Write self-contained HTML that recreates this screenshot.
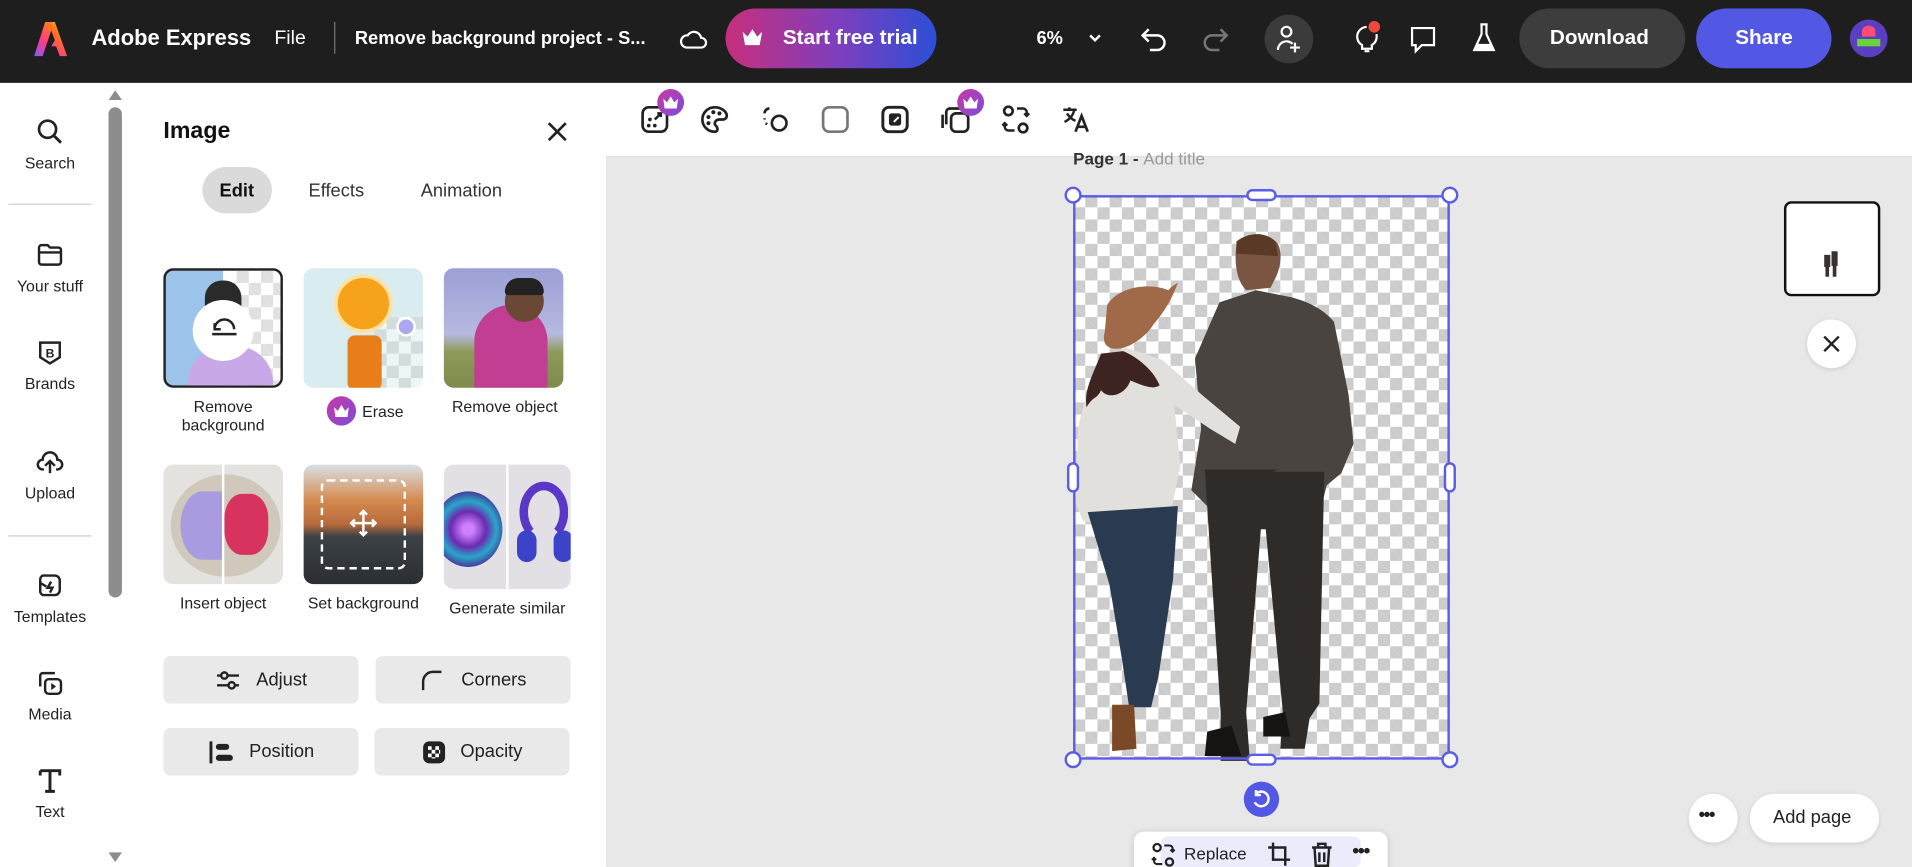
<!DOCTYPE html>
<html><head><meta charset="utf-8">
<style>
*{box-sizing:border-box;margin:0;padding:0}
html,body{width:1912px;height:867px;overflow:hidden;background:#e8e8e8;font-family:"Liberation Sans",sans-serif}
#st{position:absolute;left:0;top:0;width:1568px;height:711px;transform:scale(1.21939);transform-origin:0 0;background:#e8e8e8;overflow:hidden}
.a{position:absolute}
.top{left:0;top:0;width:1568px;height:68px;background:#1e1e1e;color:#fff}
.t{position:absolute;font-size:16px;color:#fff;white-space:nowrap}
.rail{left:0;top:68px;width:104px;height:660px;background:#fff}
.ri{position:absolute;left:0;width:82px;text-align:center;font-size:13px;color:#222}
.ri svg{display:block;margin:0 auto 6px}
.panel{left:104px;top:68px;width:393px;height:660px;background:#fff}
.tile{position:absolute;width:98px;height:98px;border-radius:8px;overflow:hidden}
.lab{position:absolute;font-size:13px;color:#222;text-align:center;width:120px}
.btn{position:absolute;width:160px;height:39px;background:#e9e9e9;border-radius:6px;font-size:15px;color:#222;display:flex;align-items:center;justify-content:center;gap:12px}
.chk{background-color:#fff;background-image:linear-gradient(45deg,#ccc 25%,transparent 25%,transparent 75%,#ccc 75%),linear-gradient(45deg,#ccc 25%,transparent 25%,transparent 75%,#ccc 75%);background-size:20px 20px;background-position:0 0,10px 10px}
.tb svg{position:absolute}
</style></head><body><div id="st">

<div class="a top">
 <svg class="a" style="left:26px;top:16px" width="30" height="32" viewBox="0 0 30 32"><defs><linearGradient id="lg" x1="0" y1="1" x2="1" y2="0"><stop offset="0" stop-color="#7b5cff"/><stop offset=".35" stop-color="#ff3a8a"/><stop offset=".7" stop-color="#ff7a1a"/><stop offset="1" stop-color="#ffcf2e"/></linearGradient></defs><path d="M11 2h8l10 28h-6l-3-8h-4l3-5-3-8-7 21H2z" fill="url(#lg)"/></svg>
 <div class="t" style="left:75px;top:21px;font-size:18px;font-weight:bold">Adobe Express</div>
 <div class="t" style="left:225px;top:23px">File</div>
 <div class="a" style="left:274px;top:18px;width:1px;height:26px;background:#777"></div>
 <div class="t" style="left:291px;top:23px;font-size:15px;font-weight:bold">Remove background project - S...</div>
 <svg class="a" style="left:556px;top:20px" width="26" height="24" viewBox="0 0 26 24"><path d="M7 19h12a4 4 0 0 0 0-8 6 6 0 0 0-11-2 5 5 0 0 0-1 10z" fill="none" stroke="#fff" stroke-width="1.8"/></svg>
 <div class="a" style="left:595px;top:7px;width:173px;height:49px;border-radius:25px;background:linear-gradient(90deg,#c72f7c,#7b3fbf 55%,#2b4fd6)"></div>
 <svg class="a" style="left:607px;top:22px" width="20" height="18" viewBox="0 0 20 18"><path d="M2 4l4 4 4-6 4 6 4-4-2 11H4z" fill="#fff"/></svg>
 <div class="t" style="left:642px;top:21px;font-size:17px;font-weight:bold">Start free trial</div>
 <div class="t" style="left:850px;top:23px;font-size:15px;font-weight:bold">6%</div>
 <svg class="a" style="left:891px;top:24px" width="14" height="14" viewBox="0 0 14 14"><path d="M3 5l4 4 4-4" fill="none" stroke="#fff" stroke-width="2"/></svg>
 <svg class="a" style="left:933px;top:18px" width="28" height="28" viewBox="0 0 28 28"><path d="M9 6L4 11l5 5M4 11h12a6 6 0 0 1 0 12h-6" fill="none" stroke="#fff" stroke-width="2"/></svg>
 <svg class="a" style="left:982px;top:18px" width="28" height="28" viewBox="0 0 28 28"><path d="M19 6l5 5-5 5M24 11H12a6 6 0 0 0 0 12h6" fill="none" stroke="#777" stroke-width="2"/></svg>
 <div class="a" style="left:1037px;top:12px;width:40px;height:40px;border-radius:50%;background:#3b3b3b"></div>
 <svg class="a" style="left:1045px;top:19px" width="24" height="26" viewBox="0 0 24 26"><circle cx="10" cy="7" r="4" fill="none" stroke="#fff" stroke-width="1.8"/><path d="M3 22a7 7 0 0 1 12-5M17 16v8M13 20h8" fill="none" stroke="#fff" stroke-width="1.8"/></svg>
 <svg class="a" style="left:1108px;top:16px" width="26" height="30" viewBox="0 0 26 30"><path d="M11 26h4M9 21a8 8 0 1 1 8 0v3H9z" fill="none" stroke="#fff" stroke-width="1.8"/><circle cx="19" cy="6" r="5.5" fill="#f0483b" stroke="#1e1e1e" stroke-width="1.5"/></svg>
 <svg class="a" style="left:1154px;top:19px" width="26" height="26" viewBox="0 0 26 26"><path d="M4 4h18v14h-10l-5 5v-5H4z" fill="none" stroke="#fff" stroke-width="1.8"/></svg>
 <svg class="a" style="left:1206px;top:17px" width="22" height="28" viewBox="0 0 22 28"><path d="M8 3h6M9 3v8L3 24h16l-6-13V3" fill="none" stroke="#fff" stroke-width="1.8"/><path d="M5 19h12l2 5H3z" fill="#fff"/></svg>
 <div class="a" style="left:1246px;top:7px;width:136px;height:49px;border-radius:25px;background:#3d3d3d"></div>
 <div class="t" style="left:1271px;top:21px;font-size:17px;font-weight:bold">Download</div>
 <div class="a" style="left:1391px;top:7px;width:111px;height:49px;border-radius:25px;background:#5258e4"></div>
 <div class="t" style="left:1423px;top:21px;font-size:17px;font-weight:bold">Share</div>
 <div class="a" style="left:1517px;top:16px;width:31px;height:31px;border-radius:50%;background:#5a3fc0"></div>
 <div class="a" style="left:1527px;top:21px;width:11px;height:9px;border-radius:50% 50% 0 0;background:#ff4d7a"></div>
 <div class="a" style="left:1523px;top:32px;width:19px;height:6px;background:#6ad33a"></div>
</div>

<div class="a rail">
 <div class="a" style="left:89px;top:20px;width:11px;height:402px;border-radius:6px;background:#8d8d8d"></div>
 <svg class="a" style="left:88px;top:5px" width="13" height="10"><path d="M1 9l5.5-8 5.5 8z" fill="#8d8d8d"/></svg>
 <svg class="a" style="left:88px;top:630px" width="13" height="10"><path d="M1 1l5.5 8 5.5-8z" fill="#8d8d8d"/></svg>
 <div class="a" style="left:7px;top:99px;width:68px;height:1px;background:#ccc"></div>
 <div class="a" style="left:7px;top:371px;width:68px;height:1px;background:#ccc"></div>
 <div class="ri" style="top:28px"><svg width="24" height="24" viewBox="0 0 24 24"><circle cx="10" cy="10" r="7" fill="none" stroke="#222" stroke-width="2.2"/><path d="M15 15l6 6" stroke="#222" stroke-width="2.4"/></svg>Search</div>
 <div class="ri" style="top:129px"><svg width="24" height="24" viewBox="0 0 24 24"><path d="M3 6a2 2 0 0 1 2-2h5l2 2h7a2 2 0 0 1 2 2v10a2 2 0 0 1-2 2H5a2 2 0 0 1-2-2zM3 10h18" fill="none" stroke="#222" stroke-width="2"/></svg>Your stuff</div>
 <div class="ri" style="top:209px"><svg width="24" height="24" viewBox="0 0 24 24"><path d="M4 4h16v12l-8 5-8-5z" fill="none" stroke="#222" stroke-width="2"/><text x="12" y="16" font-size="10" font-weight="bold" text-anchor="middle" fill="#222" font-family="Liberation Sans">B</text></svg>Brands</div>
 <div class="ri" style="top:299px"><svg width="24" height="24" viewBox="0 0 24 24"><path d="M7 18H6a4 4 0 0 1 0-8 6 6 0 0 1 12 0 4 4 0 0 1 0 8h-1M12 21v-9M8 15l4-4 4 4" fill="none" stroke="#222" stroke-width="2"/></svg>Upload</div>
 <div class="ri" style="top:400px"><svg width="24" height="24" viewBox="0 0 24 24"><path d="M6 4h10a4 4 0 0 1 4 4v8a4 4 0 0 1-4 4H6a4 4 0 0 1-2-4V8a4 4 0 0 1 2-4zM13 9l-3 5h4l-2 4M4 10l5 3" fill="none" stroke="#222" stroke-width="2"/></svg>Templates</div>
 <div class="ri" style="top:480px"><svg width="24" height="24" viewBox="0 0 24 24"><path d="M4 15V6a2 2 0 0 1 2-2h10" fill="none" stroke="#222" stroke-width="2"/><rect x="8" y="9" width="13" height="12" rx="3" fill="none" stroke="#222" stroke-width="2"/><path d="M13 12v6l4-3z" fill="#222"/></svg>Media</div>
 <div class="ri" style="top:560px"><svg width="24" height="24" viewBox="0 0 24 24"><path d="M4 4h16v4M4 4v4M12 4v17M8 21h8" fill="none" stroke="#222" stroke-width="2.4"/></svg>Text</div>
</div>

<div class="a panel">
 <div class="a" style="left:30px;top:29px;font-size:19px;font-weight:bold;color:#111">Image</div>
 <svg class="a" style="left:343px;top:30px" width="20" height="20" viewBox="0 0 20 20"><path d="M3 3l14 14M17 3L3 17" stroke="#222" stroke-width="2.2"/></svg>
 <div class="a" style="left:62px;top:69px;width:57px;height:38px;border-radius:19px;background:#dadada"></div>
 <div class="a" style="left:76px;top:80px;font-size:15px;font-weight:bold;color:#111">Edit</div>
 <div class="a" style="left:149px;top:80px;font-size:15px;color:#333">Effects</div>
 <div class="a" style="left:241px;top:80px;font-size:15px;color:#333">Animation</div>

 <div class="tile" style="left:30px;top:152px;border:2px solid #222;background:linear-gradient(90deg,#9cc3ea 50%,transparent 50%)"><div class="chk" style="position:absolute;left:48px;top:0;width:50px;height:98px;opacity:.6"></div><div style="position:absolute;left:18px;top:62px;width:70px;height:40px;border-radius:30px 30px 0 0;background:#c8a8e6"></div><div style="position:absolute;left:32px;top:8px;width:30px;height:40px;border-radius:14px;background:#2a2a2a"></div><div style="position:absolute;left:22px;top:24px;width:50px;height:50px;border-radius:50%;background:#fff"></div></div>
 <svg class="a" style="left:67px;top:188px" width="26" height="22" viewBox="0 0 26 22"><path d="M5 14a8 8 0 0 1 16 0M3 18h20M5 9l0 5 5 0" fill="none" stroke="#222" stroke-width="2"/></svg>
 <div class="lab" style="left:19px;top:258px">Remove<br>background</div>

 <div class="tile" style="left:145px;top:152px;background:#d9ecef"><div class="chk" style="position:absolute;left:58px;top:40px;width:40px;height:58px;opacity:.5"></div><div style="position:absolute;left:25px;top:5px;width:48px;height:48px;border-radius:50%;background:#f6a21c;border:3px solid #ffe2a0"></div><div style="position:absolute;left:36px;top:55px;width:28px;height:45px;border-radius:6px;background:#e77e1a"></div><div style="position:absolute;left:76px;top:40px;width:16px;height:16px;border-radius:50%;background:#a9a8f0;border:2px solid #fff"></div></div>
 <div class="a" style="left:164px;top:257px;width:24px;height:24px;border-radius:50%;background:linear-gradient(135deg,#c93aa0,#7b4be0)"></div>
 <svg class="a" style="left:169px;top:263px" width="14" height="12" viewBox="0 0 14 12"><path d="M1 3l3 3 3-5 3 5 3-3-1 8H2z" fill="#fff"/></svg>
 <div class="a" style="left:193px;top:262px;font-size:13px;color:#222">Erase</div>

 <div class="tile" style="left:260px;top:152px;background:linear-gradient(#9b9fd6,#b6b9df 55%,#8e9a58 70%,#7d8b4c)"><div style="position:absolute;left:25px;top:30px;width:60px;height:68px;border-radius:30px 30px 0 0;background:#c13e93"></div><div style="position:absolute;left:50px;top:10px;width:32px;height:34px;border-radius:50%;background:#6b4735"></div><div style="position:absolute;left:50px;top:8px;width:32px;height:14px;border-radius:16px 16px 4px 4px;background:#222"></div></div>
 <div class="lab" style="left:250px;top:258px">Remove object</div>

 <div class="tile" style="left:30px;top:313px;background:#e4e2df"><div style="position:absolute;left:6px;top:8px;width:90px;height:84px;border-radius:50%;background:#cfc8bb"></div><div style="position:absolute;left:14px;top:22px;width:36px;height:56px;border-radius:50% 0 0 50%;background:#a89be0"></div><div style="position:absolute;left:50px;top:24px;width:36px;height:50px;border-radius:40%;background:#d8335f"></div><div style="position:absolute;left:48px;top:0;width:2px;height:98px;background:#fff"></div></div>
 <div class="lab" style="left:19px;top:419px">Insert object</div>

 <div class="tile" style="left:145px;top:313px;background:linear-gradient(#d9e0e6,#d48a4f 30%,#b76a3b 50%,#3d4247 60%,#2a2e33)"><div style="position:absolute;left:14px;top:12px;width:70px;height:74px;border:2px dashed #fff;border-radius:6px"></div></div>
 <svg class="a" style="left:182px;top:349px" width="24" height="24" viewBox="0 0 24 24"><path d="M12 2v20M2 12h20M9 5l3-3 3 3M9 19l3 3 3-3M5 9l-3 3 3 3M19 9l3 3-3 3" fill="none" stroke="#fff" stroke-width="2"/></svg>
 <div class="lab" style="left:134px;top:419px">Set background</div>

 <div class="tile" style="left:260px;top:313px;width:104px;height:102px;background:#e2e0e4"><div style="position:absolute;left:-8px;top:22px;width:56px;height:62px;border-radius:50%;background:radial-gradient(circle,#d080ff 10%,#6a2bb0 35%,#2aa6c9 55%,#4b1c8e 80%)"></div><div style="position:absolute;left:51px;top:0;width:2px;height:102px;background:#fff"></div><div style="position:absolute;left:62px;top:14px;width:40px;height:50px;border-radius:50%;border:7px solid #5b37c8;border-bottom-color:transparent"></div><div style="position:absolute;left:60px;top:54px;width:16px;height:26px;border-radius:8px;background:#3b44c8"></div><div style="position:absolute;left:90px;top:54px;width:16px;height:26px;border-radius:8px;background:#3b44c8"></div></div>
 <div class="lab" style="left:252px;top:423px">Generate similar</div>

 <div class="btn" style="left:30px;top:470px"><svg width="22" height="18" viewBox="0 0 22 18"><path d="M2 5h18M2 13h18" stroke="#222" stroke-width="2"/><circle cx="8" cy="5" r="2.6" fill="#e9e9e9" stroke="#222" stroke-width="2"/><circle cx="14" cy="13" r="2.6" fill="#e9e9e9" stroke="#222" stroke-width="2"/></svg>Adjust</div>
 <div class="btn" style="left:204px;top:470px"><svg width="22" height="18" viewBox="0 0 22 18"><path d="M3 17V10a8 8 0 0 1 8-8h7" fill="none" stroke="#222" stroke-width="2"/></svg>Corners</div>
 <div class="btn" style="left:30px;top:529px"><svg width="22" height="20" viewBox="0 0 22 20"><path d="M3 1v18" stroke="#222" stroke-width="2.4"/><rect x="7" y="3" width="11" height="5" rx="2.5" fill="#222"/><rect x="7" y="12" width="14" height="5" rx="2.5" fill="#222"/></svg>Position</div>
 <div class="btn" style="left:203px;top:529px"><svg width="20" height="20" viewBox="0 0 20 20"><rect x="1" y="1" width="18" height="18" rx="5" fill="#222"/><path d="M5 5h3v3H5zM11 5h3v3h-3zM8 8h3v3H8zM5 11h3v3H5zM11 11h3v3h-3zM14 8h1v3h-1zM8 14h3v1H8z" fill="#fff"/></svg>Opacity</div>
</div>

<div class="a tb" style="left:497px;top:68px;width:1071px;height:61px;background:#fff;border-bottom:1px solid #ddd">
 <svg style="left:27px;top:17px" width="26" height="26" viewBox="0 0 26 26"><rect x="3" y="3" width="20" height="20" rx="5" fill="none" stroke="#222" stroke-width="2.2"/><circle cx="9" cy="13" r="1.5" fill="#222"/><circle cx="13" cy="18" r="1.5" fill="#222"/><circle cx="8" cy="18" r="1.5" fill="#222"/><path d="M13 13l5-5M15 8h3v3" stroke="#222" stroke-width="2" fill="none"/></svg>
 <div class="a" style="left:42px;top:5px;width:22px;height:22px;border-radius:50%;background:linear-gradient(135deg,#c93aa0,#7b4be0)"></div>
 <svg style="left:46px;top:10px" width="14" height="12" viewBox="0 0 14 12"><path d="M1 3l3 3 3-5 3 5 3-3-1 8H2z" fill="#fff"/></svg>
 <svg style="left:76px;top:17px" width="26" height="26" viewBox="0 0 26 26"><path d="M13 3a10 10 0 0 0 0 20c3 0 3-3 1-5s0-5 3-5h3a3 3 0 0 0 3-3c0-4-5-7-10-7z" fill="none" stroke="#222" stroke-width="2.2"/><circle cx="8" cy="11" r="1.7" fill="#222"/><circle cx="12" cy="7" r="1.7" fill="#222"/><circle cx="17" cy="8" r="1.7" fill="#222"/><circle cx="8" cy="16" r="1.7" fill="#222"/></svg>
 <svg style="left:126px;top:17px" width="26" height="26" viewBox="0 0 26 26"><circle cx="16" cy="16" r="6" fill="none" stroke="#222" stroke-width="2.2"/><path d="M4 8a4 4 0 0 1 4-4M4 13v-1M6 17l-1-1" fill="none" stroke="#222" stroke-width="2.2"/></svg>
 <svg style="left:175px;top:17px" width="26" height="26" viewBox="0 0 26 26"><rect x="3" y="3" width="20" height="20" rx="5" fill="none" stroke="#777" stroke-width="2.2"/></svg>
 <svg style="left:224px;top:17px" width="26" height="26" viewBox="0 0 26 26"><rect x="3" y="3" width="20" height="20" rx="5" fill="none" stroke="#222" stroke-width="2.4"/><rect x="8" y="8" width="10" height="10" rx="2" fill="#222"/><path d="M12 15l4-4" stroke="#fff" stroke-width="1.5"/></svg>
 <svg style="left:274px;top:17px" width="26" height="26" viewBox="0 0 26 26"><path d="M5 17V7a3 3 0 0 1 3-3h10M2 20V9" fill="none" stroke="#222" stroke-width="2.2"/><rect x="9" y="8" width="14" height="15" rx="4" fill="none" stroke="#222" stroke-width="2.2"/></svg>
 <div class="a" style="left:288px;top:5px;width:22px;height:22px;border-radius:50%;background:linear-gradient(135deg,#c93aa0,#7b4be0)"></div>
 <svg style="left:292px;top:10px" width="14" height="12" viewBox="0 0 14 12"><path d="M1 3l3 3 3-5 3 5 3-3-1 8H2z" fill="#fff"/></svg>
 <svg style="left:323px;top:16px" width="26" height="28" viewBox="0 0 26 28"><circle cx="7" cy="7" r="3.5" fill="none" stroke="#222" stroke-width="2.2"/><circle cx="19" cy="21" r="3.5" fill="none" stroke="#222" stroke-width="2.2"/><path d="M14 5h5a3 3 0 0 1 3 3v3M20 9l2 2 2-2M12 23H7a3 3 0 0 1-3-3v-3M6 19l-2-2-2 2" fill="none" stroke="#222" stroke-width="2"/></svg>
 <svg style="left:373px;top:17px" width="26" height="26" viewBox="0 0 26 26"><path d="M2 5h11M7 3v2M11 5c-1 5-4 8-8 10M5 8c2 3 4 5 7 6" fill="none" stroke="#222" stroke-width="2"/><path d="M12 23l5-13 5 13M14 19h6" fill="none" stroke="#222" stroke-width="2.2"/></svg>
</div>

<div class="a" style="left:880px;top:122px;font-size:14px;color:#333;font-weight:bold">Page 1 - <span style="color:#999;font-weight:normal">Add title</span></div>

<div class="a chk" style="left:880px;top:160px;width:309px;height:463px"></div>
<svg class="a" style="left:0;top:0" width="1568" height="711" viewBox="0 0 1568 711">
 <path d="M1014 200c8-10 26-10 34 0 4 8 2 20-2 28l-4 8-20 2c-8-8-10-22-8-38z" fill="#7a5542"/>
 <path d="M1014 198c10-8 24-8 32 0l2 12-34-2z" fill="#5a3a26"/>
 <path d="M1000 248l30-10 30 6c14 4 26 10 34 20l12 60 4 40-10 24-12 10-5 20-86 4-20-20 8-50-5-58z" fill="#4a4440"/>
 <path d="M988 385h60l-4 2 42 0-4 190-8 12-4 25h-20l2-30-14-150h-4l-12 150 3 40-24 0 0-40z" fill="#2f2b29"/>
 <path d="M990 600l20-5 8 25h-30zM1036 588l18-4 4 20h-22z" fill="#161412"/>
 <path d="M910 292c-12 10-20 30-26 60l-2 60 6 15 22 5 30-5 20-5 8-40-5-50 30 20 20 12 4-14-30-25-34-30-30-10z" fill="#e2e0dd"/>
 <path d="M903 290c-8 20-14 30-12 44 6-10 8-6 12-14 6 8 20 4 24-8 10 4 18 8 24 4-6-14-20-24-30-28z" fill="#3e2420"/>
 <path d="M908 250c10-16 36-18 50-12 4-4 6-5 8-6-4 10-8 20-20 34-6 10-20 20-30 20s-12-6-10-14z" fill="#a06a48"/>
 <path d="M892 420l74-5-4 60-12 80-6 25-18 0-6-40-10-60z" fill="#2a3a50"/>
 <path d="M912 578l18 0 2 36-20 2z" fill="#7a4a28"/>
</svg>
<div class="a" style="left:880px;top:160px;width:309px;height:463px;border:2px solid #5a5ee6"></div>
<div class="a" style="left:873px;top:153px;width:14px;height:14px;border-radius:50%;background:#fff;border:2px solid #5a5ee6"></div>
<div class="a" style="left:1182px;top:153px;width:14px;height:14px;border-radius:50%;background:#fff;border:2px solid #5a5ee6"></div>
<div class="a" style="left:873px;top:616px;width:14px;height:14px;border-radius:50%;background:#fff;border:2px solid #5a5ee6"></div>
<div class="a" style="left:1182px;top:616px;width:14px;height:14px;border-radius:50%;background:#fff;border:2px solid #5a5ee6"></div>
<div class="a" style="left:1022px;top:155px;width:25px;height:10px;border-radius:5px;background:#fff;border:2px solid #5a5ee6"></div>
<div class="a" style="left:1022px;top:618px;width:25px;height:10px;border-radius:5px;background:#fff;border:2px solid #5a5ee6"></div>
<div class="a" style="left:875px;top:379px;width:10px;height:25px;border-radius:5px;background:#fff;border:2px solid #5a5ee6"></div>
<div class="a" style="left:1184px;top:379px;width:10px;height:25px;border-radius:5px;background:#fff;border:2px solid #5a5ee6"></div>
<div class="a" style="left:1020px;top:641px;width:29px;height:29px;border-radius:50%;background:#5258e4"></div>
<svg class="a" style="left:1025px;top:646px" width="19" height="19" viewBox="0 0 19 19"><path d="M5 5a6 6 0 1 1-1 7M5 2v4h4" fill="none" stroke="#fff" stroke-width="2"/></svg>

<div class="a" style="left:930px;top:682px;width:208px;height:40px;border-radius:8px;background:#fff;box-shadow:0 1px 6px rgba(0,0,0,.15)"></div>
<div class="a" style="left:952px;top:686px;width:164px;height:25px;border-radius:6px;background:#ebebfb"></div>
<svg class="a" style="left:943px;top:689px" width="22" height="24" viewBox="0 0 26 28"><circle cx="7" cy="7" r="3.5" fill="none" stroke="#222" stroke-width="2.2"/><circle cx="19" cy="21" r="3.5" fill="none" stroke="#222" stroke-width="2.2"/><path d="M14 5h5a3 3 0 0 1 3 3v3M20 9l2 2 2-2M12 23H7a3 3 0 0 1-3-3v-3M6 19l-2-2-2 2" fill="none" stroke="#222" stroke-width="2"/></svg>
<div class="a" style="left:971px;top:692px;font-size:14px;color:#222">Replace</div>
<svg class="a" style="left:1039px;top:690px" width="20" height="21" viewBox="0 0 20 21"><path d="M5 1v14h14M1 5h14v15" fill="none" stroke="#222" stroke-width="2"/></svg>
<svg class="a" style="left:1074px;top:690px" width="20" height="21" viewBox="0 0 20 21"><path d="M2 5h16M7 5V2h6v3M4 5l1 15h10l1-15M8 9v8M12 9v8" fill="none" stroke="#222" stroke-width="2"/></svg>
<div class="a" style="left:1109px;top:690px;font-size:16px;font-weight:bold;color:#222;letter-spacing:-1px">•••</div>

<div class="a" style="left:1463px;top:165px;width:79px;height:78px;border:2px solid #111;border-radius:6px;background:#fff"></div>
<svg class="a" style="left:1493px;top:203px" width="18" height="26" viewBox="0 0 18 26"><path d="M3 6h5v10H3zM9 3h5v12H9zM4 16h3v8H4zM10 15h3v9h-3z" fill="#3a3230"/></svg>
<div class="a" style="left:1482px;top:262px;width:40px;height:40px;border-radius:50%;background:#fff;box-shadow:0 1px 4px rgba(0,0,0,.12)"></div>
<svg class="a" style="left:1494px;top:274px" width="16" height="16" viewBox="0 0 16 16"><path d="M2 2l12 12M14 2L2 14" stroke="#222" stroke-width="2"/></svg>
<div class="a" style="left:1385px;top:651px;width:40px;height:40px;border-radius:50%;background:#fff;box-shadow:0 1px 4px rgba(0,0,0,.12)"></div>
<div class="a" style="left:1393px;top:660px;font-size:15px;font-weight:bold;color:#222;letter-spacing:-1px">•••</div>
<div class="a" style="left:1435px;top:651px;width:106px;height:40px;border-radius:20px;background:#fff;box-shadow:0 1px 4px rgba(0,0,0,.12)"></div>
<div class="a" style="left:1454px;top:662px;font-size:15px;color:#222">Add page</div>

</div></body></html>
